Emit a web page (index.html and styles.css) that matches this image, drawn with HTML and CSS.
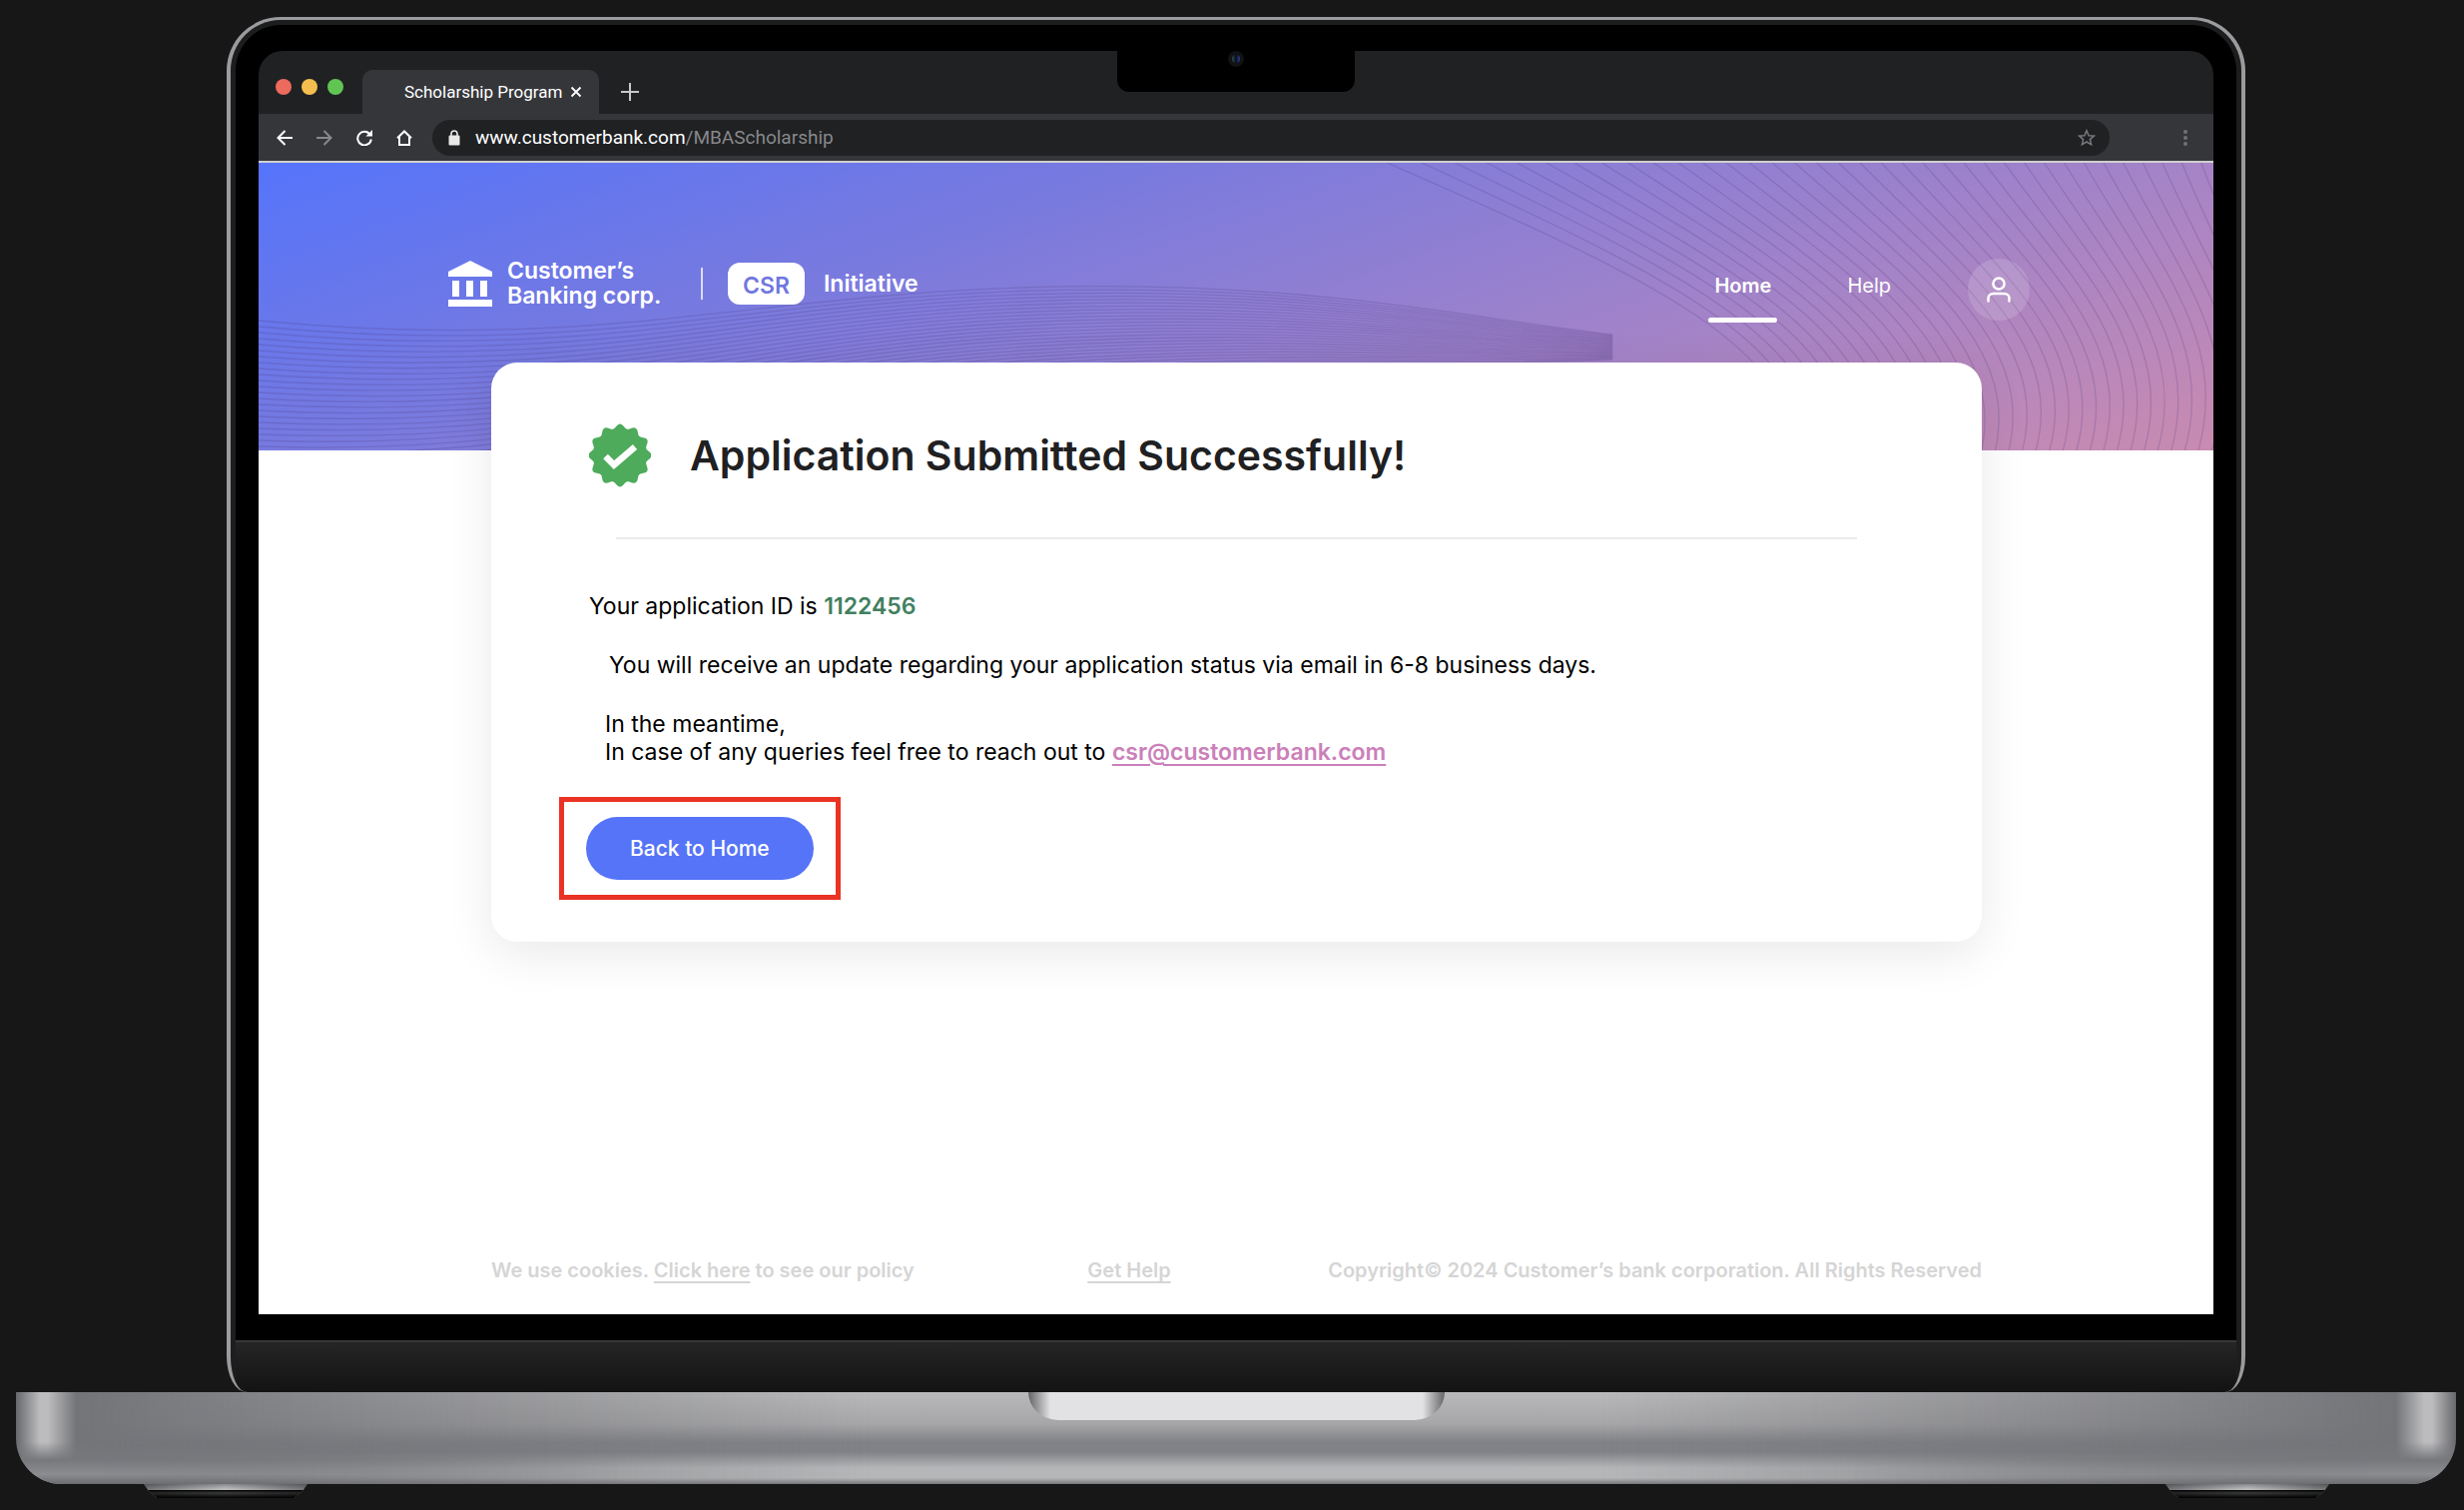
FILE: index.html
```html
<!DOCTYPE html>
<html lang="en">
<head>
    <meta charset="UTF-8">
    <meta name="viewport" content="width=device-width, initial-scale=1.0">
    <title>Scholarship Program</title>
    <link rel="stylesheet" href="styles.css">
</head>
<body>
    <div class="lid">
        <div class="notch"><span class="camera"></span></div>
        <div class="screen">
            <div class="tab-bar">
                <div class="lights">
                    <span class="light red"></span>
                    <span class="light yellow"></span>
                    <span class="light green"></span>
                </div>
                <div class="tab">
                    <span>Scholarship Program</span>
                    <button class="icon-button" aria-label="Close tab">
                        <svg width="12" height="12" viewBox="0 0 12 12"><path d="M1.5 1.5l9 9M10.5 1.5l-9 9" stroke="#fff" stroke-width="1.8"/></svg>
                    </button>
                </div>
                <button class="icon-button new-tab" aria-label="New tab">
                    <svg width="18" height="18" viewBox="0 0 18 18"><path d="M9 0v18M0 9h18" stroke="#c8c9cb" stroke-width="2"/></svg>
                </button>
            </div>
            <div class="toolbar">
                <button class="icon-button" aria-label="Back">
                    <svg width="16" height="16" viewBox="0 0 16 16" fill="none" stroke="#fff" stroke-width="2"><path d="M16 8H1.5M8.5 1L1.5 8l7 7"/></svg>
                </button>
                <button class="icon-button" aria-label="Forward">
                    <svg width="16" height="16" viewBox="0 0 16 16" fill="none" stroke="#88898c" stroke-width="2"><path d="M0 8h14.5M7.5 1l7 7-7 7"/></svg>
                </button>
                <button class="icon-button" aria-label="Reload">
                    <svg width="16" height="16" viewBox="0 0 16 16"><path d="M13.6 4.6A6.8 6.8 0 1 0 14.8 9.5" fill="none" stroke="#fff" stroke-width="2"/><path d="M16 0v6.6H9.4z" fill="#fff"/></svg>
                </button>
                <button class="icon-button" aria-label="Home page">
                    <svg width="16" height="16" viewBox="0 0 16 16" fill="none" stroke="#fff" stroke-width="2"><path d="M1 8.3L8 1.5l7 6.8M3 7v8h10V7"/></svg>
                </button>
                <div class="address">
                    <svg width="12" height="16" viewBox="0 0 12 16"><path d="M3 7V4a3 3 0 0 1 6 0v3" fill="none" stroke="#e8e8e8" stroke-width="1.6"/><rect x="0.5" y="5.5" width="11" height="10" rx="1.2" fill="#e8e8e8"/></svg>
                    <span class="url">www.customerbank.com<span class="path">/MBAScholarship</span></span>
                    <svg width="18" height="18" viewBox="0 0 18 18"><path d="M9 1.8l2.1 4.9 5.3.4-4 3.5 1.2 5.2L9 13l-4.600 2.800 1.200-5.200-4-3.500 5.300-.4z" fill="none" stroke="#77797d" stroke-width="1.500"/></svg>
                </div>
                <button class="icon-button menu" aria-label="Menu">
                    <svg width="4" height="16" viewBox="0 0 4 16" fill="#707276"><circle cx="2" cy="2" r="2"/><circle cx="2" cy="8" r="2"/><circle cx="2" cy="14" r="2"/></svg>
                </button>
            </div>

            <div class="page">
                <header class="hero">
                    <svg class="waves" id="waves" viewBox="0 0 1949 288" preserveAspectRatio="none"></svg>
                    <div class="brand">
                        <svg class="bank" width="44" height="46" viewBox="0 0 44 46" fill="#fff"><path d="M22 0l22 11v5H0v-5zM4 20h7v16H4zM18 20h7v16h-7zM32 20h7v16h-7zM0 39h44v7H0z"/></svg>
                        <div class="brand-name">Customer’s<br>Banking corp.</div>
                        <span class="divider"></span>
                        <span class="csr">CSR</span>
                        <span class="initiative">Initiative</span>
                    </div>
                    <nav class="nav">
                        <a class="active" href="#">Home</a>
                        <a href="#">Help</a>
                        <button class="profile" aria-label="Profile">
                            <svg width="24" height="26" viewBox="0 0 24 26" fill="none" stroke="#fff" stroke-width="2.500" stroke-linecap="round"><circle cx="12" cy="7" r="5.600"/><path d="M1.500 24.500v-3a5 5 0 0 1 5-4.500h11a5 5 0 0 1 5 4.500v3"/></svg>
                        </button>
                    </nav>
                </header>

                <main class="card">
                    <div class="card-title">
                        <svg id="seal" width="62" height="64" viewBox="-31 -32 62 64"><path id="sealShape" fill="#4dab5b"/><path d="M-14.500 1l8.500 8.500L15-8.500" fill="none" stroke="#fff" stroke-width="6.500"/></svg>
                        <h1>Application Submitted Successfully!</h1>
                    </div>
                    <hr>
                    <p>Your application ID is <strong>1122456</strong></p>
                    <p class="update">You will receive an update regarding your application status via email in 6-8 business days.</p>
                    <p class="contact">In the meantime,<br>In case of any queries feel free to reach out to <a href="mailto:csr@customerbank.com">csr@customerbank.com</a></p>
                    <div class="highlight">
                        <button class="back-home">Back to Home</button>
                    </div>
                </main>

                <footer class="footer">
                    <span>We use cookies. <a href="#">Click here</a> to see our policy</span>
                    <span class="get-help"><a href="#">Get Help</a></span>
                    <span>Copyright© 2024 Customer’s bank corporation. All Rights Reserved</span>
                </footer>
            </div>
        </div>
        <div class="chin"></div>
    </div>
    <div class="base"><div class="thumb"></div></div>
    <div class="feet">
        <span class="foot"></span>
        <span class="foot"></span>
    </div>

    <script>
        function addLine(d) {
            const path = document.createElementNS('http://www.w3.org/2000/svg', 'path');
            path.setAttribute('d', d);
            document.getElementById('waves').appendChild(path);
        }

        // steep lines on the right side
        for (let i = 0; i < 46; i++) {
            const top = 1125 + 19 * i + 150 * (1 - Math.exp(-i / 9));
            const bottom = 1529 + 13.5 * i;
            const bulge = Math.min(i * 1.6, 30);
            addLine(`M${top} 0C${top + 0.62 * (bottom - top)} 110 ${bottom + bulge} 180 ${bottom} 288`);
        }

        // flat lines on the left side
        for (let i = 0; i < 26; i++) {
            addLine(`M0 ${158 + 6 * i}C330 ${190 + 5 * i} 480 ${134 + 4 * i} 760 ${125 + 3.5 * i}S1200 ${155 + 2 * i} 1350 ${172 + i}`);
        }

        // scalloped seal round the tick
        let points = [];
        for (let a = 0; a < 360; a += 3) {
            const rad = a * Math.PI / 180;
            const r = 29.3 + 2.2 * Math.cos(12 * rad);
            points.push(`${(r * Math.sin(rad)).toFixed(2)} ${(-r * Math.cos(rad)).toFixed(2)}`);
        }
        document.getElementById('sealShape').setAttribute('d', 'M' + points.join('L') + 'z');
    </script>
</body>
</html>
```
FILE: styles.css
```css
* {
    box-sizing: border-box;
}

body {
    margin: 0;
    min-height: 100vh;
    padding: 17px 8px 12px 16px;
    background: #171717;
    font-family: Inter, "Liberation Sans", sans-serif;
    display: flex;
    flex-direction: column;
}

button {
    font: inherit;
    border: 0;
    padding: 0;
    cursor: pointer;
}

/* laptop lid */
.lid {
    position: relative;
    flex: 1;
    display: flex;
    flex-direction: column;
    margin: 0 211px;
    padding: 26px 28px 0;
    background: #000;
    border: 4px solid #9b9b9f;
    border-top-width: 3px;
    border-bottom: 0;
    border-radius: 54px 54px 20px 20px / 54px 54px 36px 36px;
    box-shadow: inset 0 0 0 5px #1c1d1d;
    padding-top: 31px;
}

.notch {
    position: absolute;
    top: 31px;
    left: 50%;
    width: 238px;
    height: 41px;
    margin-left: -119px;
    background: #000;
    border-radius: 0 0 12px 12px;
}

.camera {
    display: block;
    width: 16px;
    height: 16px;
    margin: 0 auto;
    border: 4px solid #111213;
    border-radius: 50%;
    background: linear-gradient(90deg, #31504f, #070b1c 50%, #2b448f);
}

.screen {
    flex: 1;
    display: flex;
    flex-direction: column;
    border-radius: 24px 24px 0 0;
    overflow: hidden;
    background: #202123;
}

.chin {
    height: 52px;
    margin: 26px -23px 0;
    border-top: 2px solid #383838;
    border-radius: 0 0 16px 16px;
    background: linear-gradient(#252525, #131313);
}

/* browser */
.tab-bar {
    display: flex;
    align-items: flex-end;
    height: 63px;
    padding-left: 17px;
    font: 17px/24px Roboto, sans-serif;
    color: #fff;
}

.lights {
    display: flex;
    gap: 10px;
    padding-bottom: 19px;
}

.light {
    width: 16px;
    height: 16px;
    border-radius: 50%;
}

.red {
    background: #ec6a5e;
}

.yellow {
    background: #f4bf4f;
}

.green {
    background: #61c554;
}

.tab {
    display: flex;
    justify-content: space-between;
    align-items: center;
    width: 237px;
    height: 44px;
    margin-left: 19px;
    padding: 0 17px 0 42px;
    background: #35363a;
    border-radius: 10px 10px 0 0;
}

.icon-button {
    display: flex;
    background: none;
}

.new-tab {
    margin: 0 0 13px 22px;
}

.toolbar {
    display: flex;
    align-items: center;
    gap: 24px;
    height: 49px;
    padding: 0 26px 0 18px;
    background: #35363a;
    border-bottom: 2px solid #d0d0d0;
}

.address {
    flex: 1;
    display: flex;
    align-items: center;
    gap: 15px;
    height: 36px;
    margin-left: -4px;
    padding: 0 14px 0 16px;
    border-radius: 18px;
    background: #202123;
    font: 19px/24px Roboto, sans-serif;
    color: #fff;
}

.url {
    flex: 1;
}

.path {
    color: #87888b;
}

.menu {
    margin-left: 50px;
}

/* web page */
.page {
    flex: 1;
    display: flex;
    flex-direction: column;
    background: #fff;
}

.hero {
    position: relative;
    display: flex;
    justify-content: space-between;
    align-items: flex-start;
    height: 288px;
    padding: 96px 184px 0 190px;
    background: linear-gradient(161deg, #5574fb, #7479e1 28%, #a383c8 68%, #c98bb0);
    color: #fff;
}

.waves {
    position: absolute;
    top: 0;
    left: 0;
    width: 100%;
    height: 100%;
    fill: none;
    stroke: rgba(70, 50, 120, 0.2);
    stroke-width: 1.3;
}

.brand {
    position: relative;
    display: flex;
    align-items: center;
    font-size: 23px;
    line-height: 25px;
    font-weight: 600;
}

.brand-name {
    width: 195px;
    padding-left: 15px;
}

.bank {
    flex: none;
}

.divider {
    width: 2px;
    height: 32px;
    margin: 0 25px 0 14px;
    background: #dcdcf6;
}

.csr {
    width: 77px;
    height: 42px;
    padding-top: 3px;
    border-radius: 12px;
    background: #fff;
    color: #7077df;
    line-height: 40px;
    text-align: center;
}

.initiative {
    padding-left: 19px;
}

.nav {
    position: relative;
    display: flex;
    align-items: flex-start;
    font-size: 20px;
    line-height: 26px;
}

.nav a {
    position: relative;
    margin-right: 64px;
    padding: 14px 6px 0;
    color: #fff;
    text-decoration: none;
}

.nav .active {
    font-weight: 600;
}

.nav .active::after {
    content: "";
    position: absolute;
    left: 0;
    right: 0;
    top: 59px;
    height: 5px;
    border-radius: 3px;
    background: #fff;
}

.profile {
    display: flex;
    align-items: center;
    justify-content: center;
    width: 62px;
    height: 62px;
    margin-left: 7px;
    border-radius: 50%;
    background: rgba(255, 255, 255, 0.14);
}

.card {
    position: relative;
    margin: -88px 232px 0 233px;
    padding: 61px 98px 42px;
    border-radius: 26px;
    background: #fff;
    box-shadow: 0 12px 48px rgba(0, 0, 0, 0.09);
    font-size: 23px;
    line-height: 28px;
    color: #000;
}

.card-title {
    display: flex;
    align-items: center;
    gap: 39px;
}

.card h1 {
    margin: 0;
    font-size: 41px;
    line-height: 50px;
    font-weight: 600;
    color: #202022;
}

.card hr {
    margin: 50px 27px 53px;
    border: 0;
    border-top: 2px solid #ececec;
}

.card p {
    margin: 0 0 31px;
}

.card strong {
    font-weight: 600;
    color: #417f60;
}

.card .update {
    padding-left: 20px;
}

.card .contact {
    padding-left: 16px;
}

.contact a {
    color: #cb80ba;
    font-weight: 600;
    text-decoration-thickness: 2px;
    text-underline-offset: 4px;
}

.highlight {
    width: fit-content;
    margin-left: -30px;
    padding: 15px 22px;
    border: 5px solid #ea3323;
}

.back-home {
    display: block;
    height: 63px;
    padding: 0 44px;
    border-radius: 32px;
    background: #5674f7;
    color: #fff;
    font-size: 21px;
    font-weight: 500;
}

.footer {
    display: flex;
    justify-content: space-between;
    margin: auto 232px 0 233px;
    padding-bottom: 31px;
    font-size: 20px;
    line-height: 26px;
    font-weight: 600;
    color: #d5d5d5;
}

.footer a {
    color: inherit;
    text-underline-offset: 4px;
}

.get-help {
    padding-left: 16px;
}

/* laptop base */
.base {
    position: relative;
    height: 92px;
    border-radius: 0 0 46px 46px;
    background: linear-gradient(90deg, #67686c, #bcbcbe 24px, #bcbcbe 32px, #747579 60px, #747579 calc(100% - 60px), #bcbcbe calc(100% - 32px), #bcbcbe calc(100% - 24px), #67686c);
    overflow: hidden;
}

.base::before {
    content: "";
    position: absolute;
    inset: 0;
    background: linear-gradient(#b9b9bb, #a6a6a8 32px, #818287 50px, #818287 60px, #b5b6b8 76px, #b5b6b8 86px, #77787a);
    -webkit-mask-image: linear-gradient(90deg, transparent 60px, #000 35%, #000 65%, transparent calc(100% - 60px));
    mask-image: linear-gradient(90deg, transparent 60px, #000 35%, #000 65%, transparent calc(100% - 60px));
}

/* shade below the corner highlights */
.base::after {
    content: "";
    position: absolute;
    inset: 0;
    background: linear-gradient(transparent 50px, #77787c 68px, #8c8d90 82px, #6c6d70);
    -webkit-mask-image: linear-gradient(90deg, #000 60px, transparent 25%, transparent 75%, #000 calc(100% - 60px));
    mask-image: linear-gradient(90deg, #000 60px, transparent 25%, transparent 75%, #000 calc(100% - 60px));
}

.thumb {
    position: relative;
    z-index: 1;
    width: 417px;
    height: 28px;
    margin: 0 auto;
    border-radius: 0 0 30px 30px / 0 0 28px 28px;
    background: linear-gradient(90deg, #646467, #e2e2e4 22px, #e2e2e4 calc(100% - 22px), #646467);
}

.feet {
    display: flex;
    justify-content: space-between;
    height: 14px;
    margin: 0 127px 0 128px;
}

.foot {
    width: 164px;
    clip-path: polygon(0 0, 100% 0, 97% 50%, 92% 100%, 8% 100%, 3% 50%);
    background: linear-gradient(rgba(0, 0, 0, 0.3), transparent 6px, #000 6px, rgba(0, 0, 0, 0.7) 9px, #000), linear-gradient(90deg, #77787b, #c5c6c8 50%, #77787b);
}
```
